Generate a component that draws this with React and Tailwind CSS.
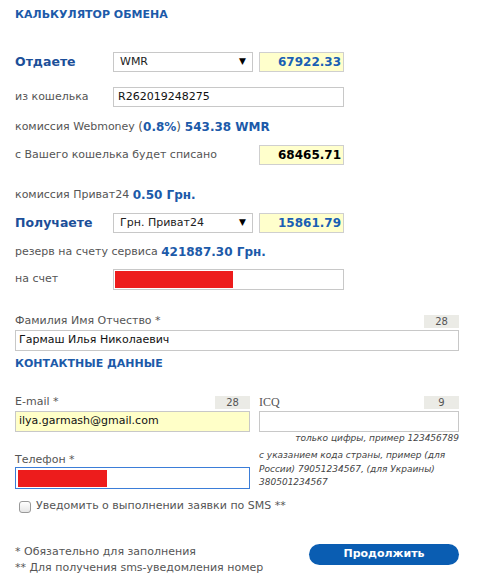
import React from 'react';

const font = { fontFamily: '"DejaVu Sans", Verdana, sans-serif' };

function Counter({ value }) {
  return (
    <span className="h-[13px] w-[35px] bg-[#ebebe6] text-[10px] leading-[13px] text-[#555] text-center">
      {value}
    </span>
  );
}

function Select({ value }) {
  return (
    <div className="w-[140px] h-[20px] border border-[#c8c8c8] bg-white flex items-center justify-between pl-[6px] pr-[6px] text-[11px] text-[#222]">
      <span>{value}</span>
      <span className="text-[9px] text-black">▼</span>
    </div>
  );
}

function Amount({ value, blue }) {
  return (
    <div
      className={`w-[85px] h-[20px] border border-[#cfcfcf] bg-[#ffffcc] flex items-center justify-end pr-[2px] text-[12px] font-bold ${
        blue ? 'text-[#1a5fb4]' : 'text-black'
      }`}
    >
      {value}
    </div>
  );
}

export default function App() {
  return (
    <div className="w-[481px] h-[575px] bg-white text-[11px] text-[#555]" style={font}>
      <div className="ml-[15px] w-[444px] flex flex-col">
        {/* Калькулятор */}
        <div className="mt-[8px] h-[14px] leading-[14px] font-bold text-[#1c5aa9] text-[11px]">
          КАЛЬКУЛЯТОР ОБМЕНА
        </div>

        <div className="mt-[30px] h-[20px] flex items-center">
          <span className="w-[98px] font-bold text-[#1c4f99] text-[12.5px]">Отдаете</span>
          <Select value="WMR" />
          <div className="ml-[6px]">
            <Amount value="67922.33" blue />
          </div>
        </div>

        <div className="mt-[15px] h-[20px] flex items-center">
          <span className="w-[98px]">из кошелька</span>
          <div className="w-[231px] h-[20px] border border-[#c8c8c8] flex items-center pl-[4px] text-[11px] text-[#111]">
            R262019248275
          </div>
        </div>

        <div className="mt-[10px] h-[20px] flex items-center">
          комиссия Webmoney&nbsp;<span className="text-[12px]">(<b className="text-[#1c5aa9]">0.8%</b>)&nbsp;<b className="text-[#1c5aa9]">543.38 WMR</b></span>
        </div>

        <div className="mt-[8px] h-[20px] flex items-center">
          <span className="w-[244px]">с Вашего кошелька будет списано</span>
          <Amount value="68465.71" />
        </div>

        <div className="mt-[20px] h-[20px] flex items-center">
          комиссия Приват24&nbsp;<b className="text-[#1c5aa9] text-[12px]">0.50 Грн.</b>
        </div>

        <div className="mt-[8px] h-[20px] flex items-center">
          <span className="w-[98px] font-bold text-[#1c4f99] text-[12.5px]">Получаете</span>
          <Select value="Грн. Приват24" />
          <div className="ml-[6px]">
            <Amount value="15861.79" blue />
          </div>
        </div>

        <div className="mt-[9px] h-[20px] flex items-center">
          резерв на счету сервиса&nbsp;<b className="text-[#1c5aa9] text-[12px]">421887.30 Грн.</b>
        </div>

        <div className="mt-[7px] h-[21px] flex items-center">
          <span className="w-[98px]">на счет</span>
          <div className="w-[231px] h-[21px] border border-[#c8c8c8] flex items-center pl-[1px]">
            <div className="w-[118px] h-[17px] bg-[#ed1c1c]" />
          </div>
        </div>

        {/* ФИО */}
        <div className="mt-[24px] h-[14px] flex items-center justify-between">
          <span>Фамилия Имя Отчество *</span>
          <Counter value="28" />
        </div>
        <div className="mt-[2px] h-[21px] border border-[#c8c8c8] flex items-center pl-[3px] text-[#111]">
          Гармаш Илья Николаевич
        </div>

        <div className="mt-[6px] h-[14px] leading-[14px] font-bold text-[#1c5aa9]">
          КОНТАКТНЫЕ ДАННЫЕ
        </div>

        {/* Контакты */}
        <div className="mt-[24px] flex gap-[9px]">
          <div className="w-[235px] flex flex-col">
            <div className="h-[14px] flex items-center justify-between">
              <span>E-mail *</span>
              <Counter value="28" />
            </div>
            <div className="mt-[2px] h-[21px] border border-[#c8c8c8] bg-[#ffffc8] flex items-center pl-[3px] text-[#111]">
              ilya.garmash@gmail.com
            </div>
          </div>
          <div className="w-[200px] flex flex-col">
            <div className="h-[14px] flex items-center justify-between">
              <span style={{ fontFamily: '"Liberation Serif", serif' }} className="text-[12px]">ICQ</span>
              <Counter value="9" />
            </div>
            <div className="mt-[2px] h-[21px] border border-[#c8c8c8]" />
          </div>
        </div>
        <div className="h-[13px] leading-[13px] text-right italic text-[9px] text-[#444]">
          только цифры, пример 123456789
        </div>

        <div className="mt-[3px] flex gap-[9px]">
          <div className="w-[235px] flex flex-col">
            <div className="mt-[5px] h-[14px] flex items-center">Телефон *</div>
            <div className="h-[22px] border border-[#3b7dd8] flex items-center pl-[2px]">
              <div className="w-[89px] h-[17px] bg-[#ed1c1c]" />
            </div>
          </div>
          <div className="w-[200px] italic text-[9px] leading-[13.5px] text-[#444] pt-[1px]">
            с указанием кода страны, пример (для России) 79051234567, (для Украины) 380501234567
          </div>
        </div>

        <div className="mt-[9px] h-[16px] flex items-center gap-[5px] ml-[4px]">
          <span className="w-[12px] h-[12px] rounded-[3px] border border-[#999] bg-gradient-to-b from-white to-[#e6e6e6]" />
          <span>Уведомить о выполнении заявки по SMS **</span>
        </div>

        {/* Footer */}
        <div className="mt-[29px] flex justify-between items-start">
          <div className="flex flex-col leading-[16px]">
            <span>* Обязательно для заполнения</span>
            <span>** Для получения sms-уведомления номер</span>
          </div>
          <button className="w-[150px] h-[21px] rounded-full bg-[#0a5db2] text-white font-bold text-[11px] flex items-center justify-center">
            Продолжить
          </button>
        </div>
      </div>
    </div>
  );
}
